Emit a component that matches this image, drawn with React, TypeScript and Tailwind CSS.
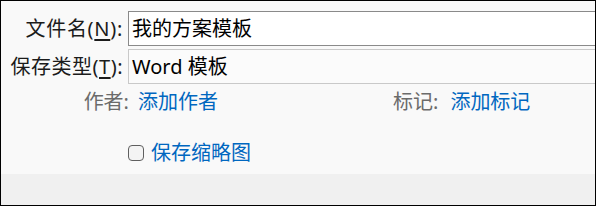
import React from "react";

const font = { fontFamily: '"Noto Sans", "Noto Sans CJK SC", sans-serif' };

export default function App() {
  return (
    <div className="w-[597px] h-[208px] bg-white" style={font}>
      <div className="w-[596px] h-[206px] border border-black bg-[#f9f9f9] flex flex-col overflow-hidden">
        <div className="flex-1 flex flex-col pt-[10px]">
          <div className="flex items-center h-[35px]">
            <div className="w-[127px] shrink-0 text-right pr-[5px] text-[20px] leading-none tracking-[0.7px] text-[#1b1b1b] whitespace-nowrap">
              文件名(<span className="underline underline-offset-[3px]">N</span>):
            </div>
            <div className="flex-1 -mr-[4px] h-[35px] border border-[#8a8a8a] bg-white flex items-center pl-[3px] text-[20px] text-black">
              我的方案模板
            </div>
          </div>
          <div className="flex items-center h-[35px] mt-[3px]">
            <div className="w-[127px] shrink-0 text-right pr-[5px] text-[20px] leading-none tracking-[0.5px] text-[#1b1b1b] whitespace-nowrap">
              保存类型(<span className="underline underline-offset-[3px]">T</span>):
            </div>
            <div className="flex-1 -mr-[4px] h-[35px] border border-[#c9c9c9] bg-[#fbfbfb] flex items-center pl-[3px] text-[20px] text-black">
              Word 模板
            </div>
          </div>
          <div className="flex items-center h-[28px] mt-[4px] text-[20px] leading-none">
            <div className="w-[128px] shrink-0 text-right text-[#6b6b6b]">作者:</div>
            <div className="ml-[9px] text-[#0067c0]">添加作者</div>
            <div className="ml-[175px] text-[#6b6b6b]">标记:</div>
            <div className="ml-[12px] text-[#0067c0]">添加标记</div>
          </div>
          <div className="flex items-center mt-[27px] ml-[127px] text-[20px] leading-none">
            <div className="w-[16px] h-[16px] rounded-[4px] border border-[#5f5f5f] bg-[#f4f4f4]" />
            <div className="ml-[7px] text-[#0067c0]">保存缩略图</div>
          </div>
        </div>
        <div className="h-[31px] bg-[#f0f0f0]" />
      </div>
    </div>
  );
}
